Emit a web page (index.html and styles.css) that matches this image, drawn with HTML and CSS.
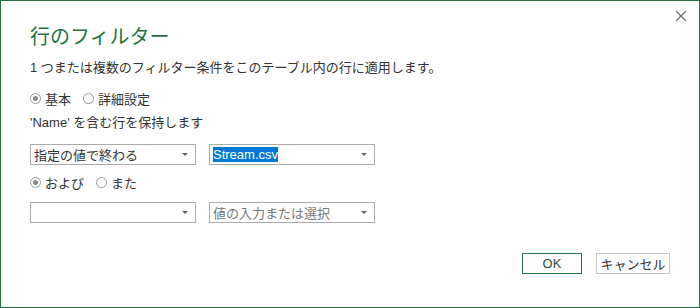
FILE: index.html
```html
<!DOCTYPE html>
<html lang="ja">
<head>
  <meta charset="UTF-8" />
  <title>行のフィルター</title>
  <link rel="stylesheet" href="styles.css">
</head>
<body>
  <div class="dialog">
    <button class="close" aria-label="閉じる">
      <svg width="12" height="12" viewBox="0 0 12 12"><path d="M1 1L11 11M11 1L1 11" stroke="#6e6e6e" stroke-width="1.2" fill="none"/></svg>
    </button>

    <h1>行のフィルター</h1>
    <p class="desc">1 つまたは複数のフィルター条件をこのテーブル内の行に適用します。</p>

    <div class="radios">
      <label class="radio"><span class="dot checked"></span>基本</label>
      <label class="radio"><span class="dot"></span>詳細設定</label>
    </div>

    <p class="keep">'Name' を含む行を保持します</p>

    <div class="row">
      <div class="select"><span class="val">指定の値で終わる</span><span class="arrow"></span></div>
      <div class="select"><span class="val"><span class="sel">Stream.csv</span></span><span class="arrow"></span></div>
    </div>

    <div class="radios logic">
      <label class="radio"><span class="dot checked"></span>および</label>
      <label class="radio"><span class="dot"></span>また</label>
    </div>

    <div class="row">
      <div class="select"><span class="val"></span><span class="arrow"></span></div>
      <div class="select input"><span class="val placeholder">値の入力または選択</span><span class="arrow"></span></div>
    </div>

    <div class="buttons">
      <button class="btn ok">OK</button>
      <button class="btn">キャンセル</button>
    </div>
  </div>
</body>
</html>
```

FILE: styles.css
```css
body {
  margin: 0;
  font-family: "Liberation Sans", "Noto Sans CJK JP", sans-serif;
  color: #333;
  background: #fff;
}

.dialog {
  position: relative;
  width: 700px;
  height: 308px;
  box-sizing: border-box;
  border: 1px solid #217346;
  padding: 20px 0 0 29px;
}

.close {
  position: absolute;
  top: 5px;
  right: 8px;
  width: 20px;
  height: 20px;
  padding: 0;
  border: none;
  background: none;
  display: flex;
  align-items: center;
  justify-content: center;
}

h1 {
  margin: 0;
  font-size: 20px;
  font-weight: normal;
  line-height: 32px;
  color: #217346;
}

.desc {
  margin: 0;
  padding-top: 4px;
  font-size: 13px;
  line-height: 22px;
  color: #333;
}

.radios {
  display: flex;
  gap: 12px;
  margin-top: 8px;
  height: 22px;
  align-items: center;
}

.radio {
  display: flex;
  align-items: center;
  font-size: 13px;
  color: #333;
}

.dot {
  width: 9px;
  height: 9px;
  border: 1px solid #999;
  border-radius: 50%;
  margin-right: 4px;
  box-sizing: content-box;
  display: flex;
  align-items: center;
  justify-content: center;
}

.dot.checked::after {
  content: "";
  width: 5px;
  height: 5px;
  border-radius: 50%;
  background: #8a8a8a;
}

.keep {
  margin: 3px 0 0;
  font-size: 13px;
  line-height: 22px;
}

.row {
  display: flex;
  gap: 13px;
  margin-top: 10px;
}

.select {
  width: 166px;
  height: 21px;
  box-sizing: border-box;
  border: 1px solid #ababab;
  display: flex;
  align-items: center;
  padding: 0 7px 0 3px;
  font-size: 13px;
}

.val {
  flex: 1;
  white-space: nowrap;
  overflow: hidden;
}

.sel {
  background: #0078d7;
  color: #fff;
  padding: 1px 0;
}

.placeholder {
  color: #777;
}

.arrow {
  width: 0;
  height: 0;
  border-left: 3px solid transparent;
  border-right: 3px solid transparent;
  border-top: 3px solid #666;
}

.logic {
  margin-top: 6px;
}

.row + .logic + .row {
  margin-top: 9px;
}

.buttons {
  display: flex;
  justify-content: flex-end;
  gap: 14px;
  margin: 30px 29px 0 0;
}

.btn {
  height: 21px;
  box-sizing: border-box;
  border: 1px solid #c6c6c6;
  background: #fff;
  font-family: inherit;
  font-size: 13px;
  color: #333;
  padding: 0;
  width: 74px;
}

.btn.ok {
  width: 60px;
  border-color: #217346;
  color: #2f4a3c;
}
```
